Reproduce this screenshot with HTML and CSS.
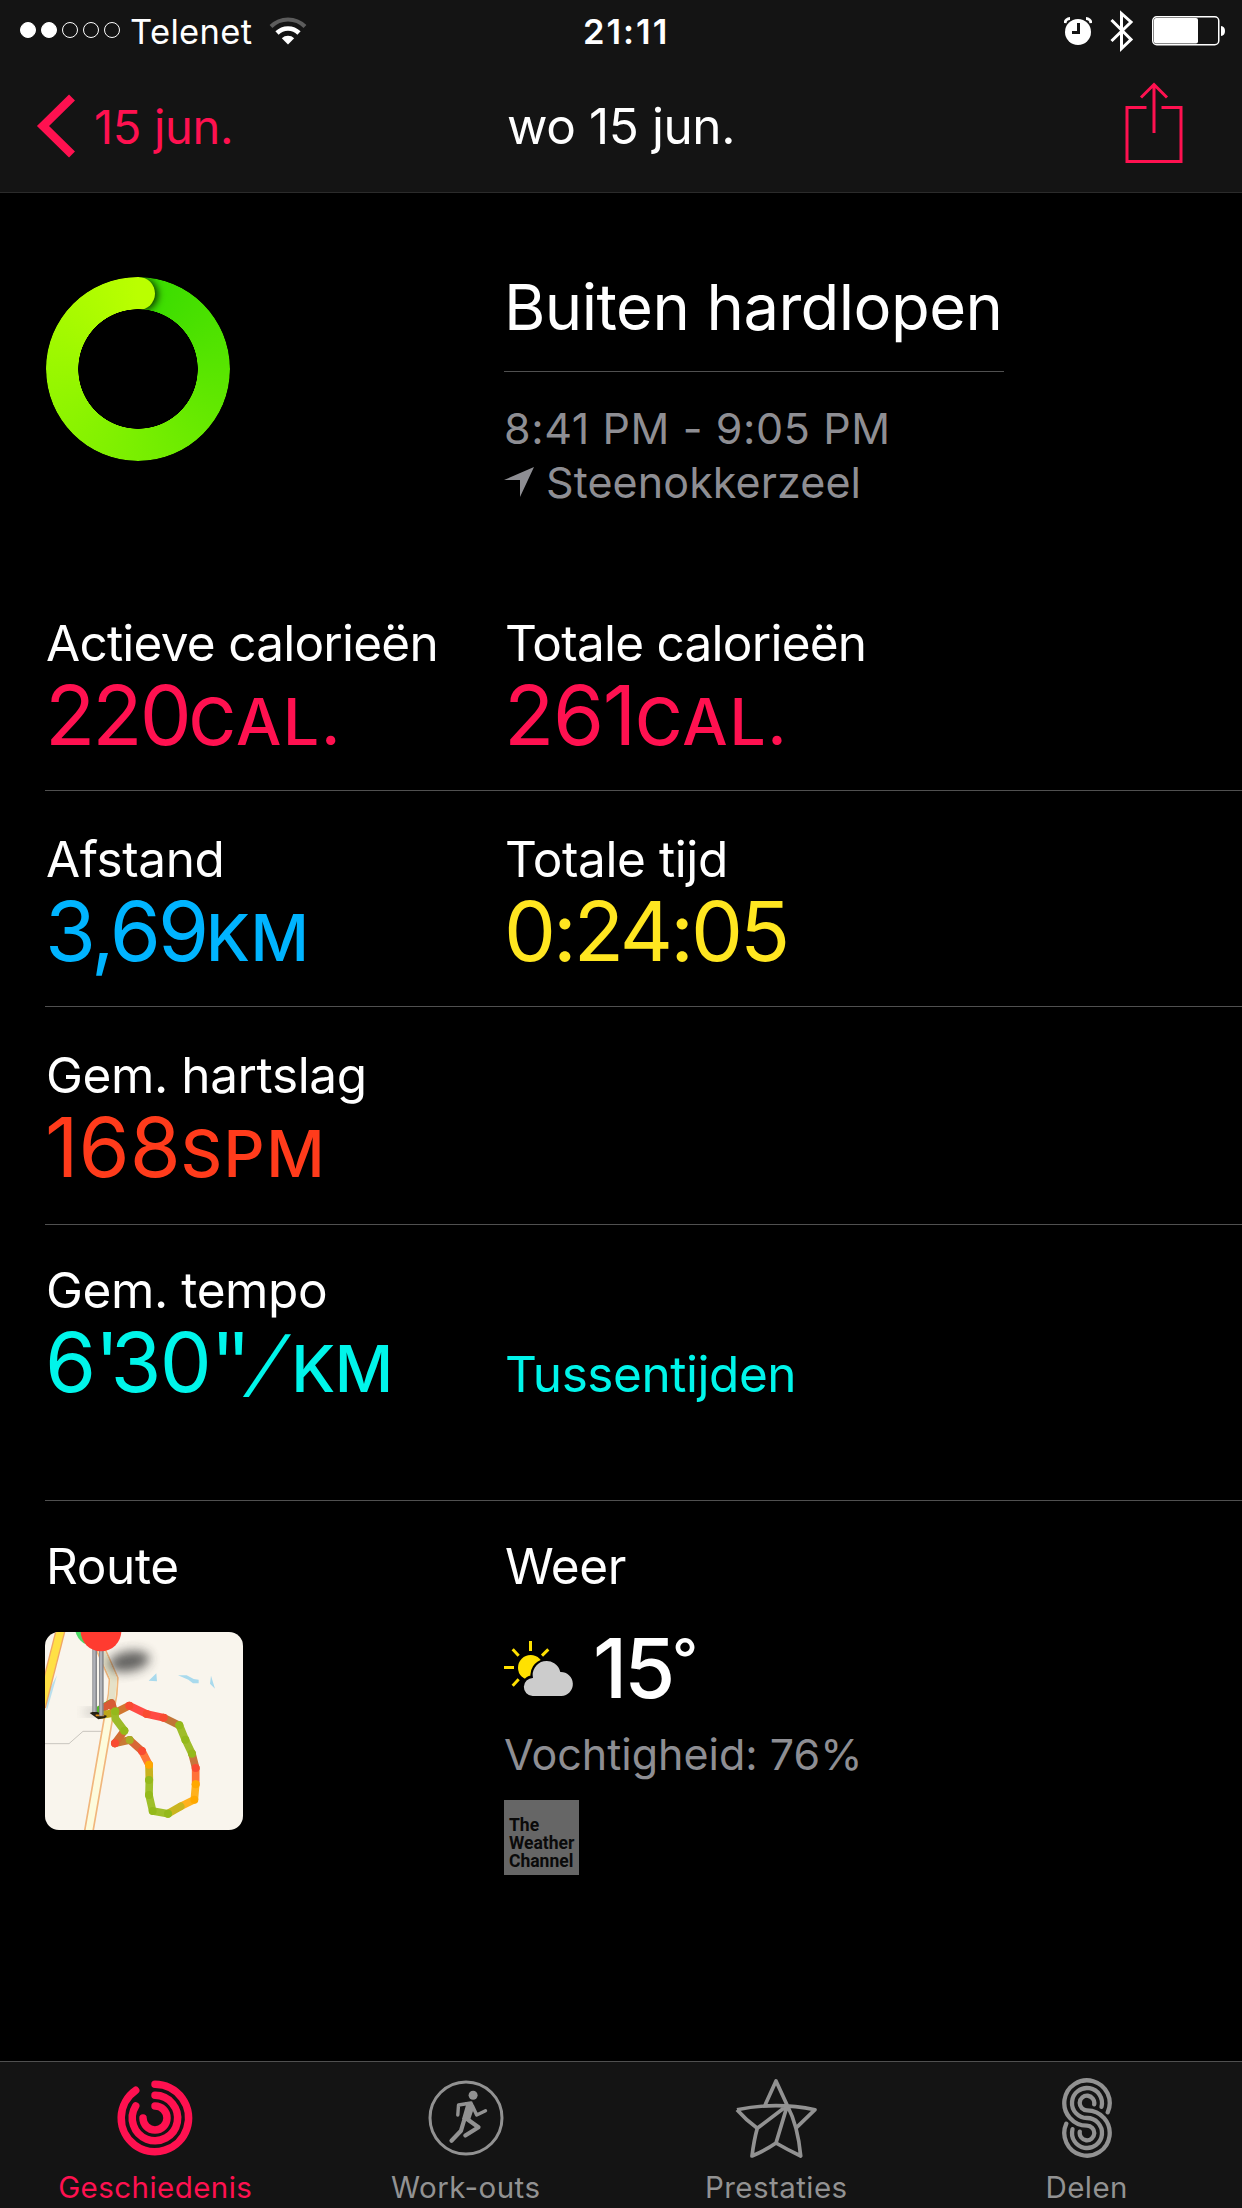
FILE: index.html
```html
<!DOCTYPE html>
<html lang="nl">
<head>
  <meta charset="UTF-8">
  <meta name="viewport" content="width=device-width, initial-scale=1.0">
  <title>Activiteit</title>
  <link rel="stylesheet" href="styles.css">
</head>
<body>
  <header class="header">
    <div class="status-bar">
      <div class="status-left">
        <span class="dot filled"></span>
        <span class="dot filled"></span>
        <span class="dot"></span>
        <span class="dot"></span>
        <span class="dot"></span>
        <span class="carrier">Telenet</span>
        <svg class="wifi" width="38" height="28" viewBox="0 0 38 28">
          <path d="M2 9.500A24 24 0 0 1 36 9.500" fill="none" stroke="#5c5c5c" stroke-width="4"/>
          <path d="M8 16A15.600 15.600 0 0 1 30 16" fill="none" stroke="#fff" stroke-width="4.600"/>
          <path d="M12.800 21.300A9 9 0 0 1 25.200 21.300L19 27.500Z" fill="#fff"/>
        </svg>
      </div>
      <div class="clock">21:11</div>
      <div class="status-right">
        <svg width="28" height="28" viewBox="0 0 28 28">
          <circle cx="14" cy="15" r="13" fill="#fff"/>
          <path d="M1 6A5 5 0 0 1 6 1.500M27 6A5 5 0 0 0 22 1.500" fill="none" stroke="#fff" stroke-width="3"/>
          <path d="M14.500 6V15.500H8" fill="none" stroke="#141414" stroke-width="3"/>
        </svg>
        <svg class="bluetooth" width="24" height="42" viewBox="0 0 24 42">
          <path d="M1.500 10L21 29.500L11.500 38.500V3.500L21 12L1.500 31" fill="none" stroke="#fff" stroke-width="3"/>
        </svg>
        <svg class="battery" width="74" height="30" viewBox="0 0 74 30">
          <rect x="0.750" y="0.750" width="66" height="28" rx="4" fill="none" stroke="#fff" stroke-width="1.500"/>
          <rect x="2" y="2" width="44" height="25.500" rx="2" fill="#fff"/>
          <path d="M69 10Q73 10.500 73 15T69 20Z" fill="#fff"/>
        </svg>
      </div>
    </div>
    <nav class="nav-bar">
      <a class="back" href="#">
        <svg width="40" height="64" viewBox="0 0 40 64">
          <path d="M36 3.500L7 32L36 60.500" fill="none" stroke="#ff1150" stroke-width="8.500"/>
        </svg>
        <span>15 jun.</span>
      </a>
      <h1>wo 15 jun.</h1>
      <a class="share" href="#" aria-label="Deel">
        <svg width="58" height="82" viewBox="0 0 58 82">
          <path d="M21.500 25.500H2V79.500H56V25.500H36.500M29 51V3M16 15.500L29 2.500L42 15.500" fill="none" stroke="#ff1150" stroke-width="3"/>
        </svg>
      </a>
    </nav>
  </header>

  <main>
    <section class="summary">
      <div class="ring"></div>
      <div class="info">
        <h2>Buiten hardlopen</h2>
        <p class="time">8:41 PM - 9:05 PM</p>
        <p class="place">
          <svg width="30" height="30" viewBox="0 0 30 30"><path d="M30 0L0 13H16V30Z" fill="#8e8e93"/></svg>
          <span>Steenokkerzeel</span>
        </p>
      </div>
    </section>

    <section class="row calories">
      <div>
        <h3>Actieve calorieën</h3>
        <p class="value pink">220<span class="unit">CAL.</span></p>
      </div>
      <div>
        <h3>Totale calorieën</h3>
        <p class="value pink total">261<span class="unit">CAL.</span></p>
      </div>
    </section>

    <section class="row">
      <div>
        <h3>Afstand</h3>
        <p class="value blue">3,69<span class="unit">KM</span></p>
      </div>
      <div>
        <h3>Totale tijd</h3>
        <p class="value yellow">0:24:05</p>
      </div>
    </section>

    <section class="row heart">
      <div>
        <h3>Gem. hartslag</h3>
        <p class="value orange">168<span class="unit">SPM</span></p>
      </div>
    </section>

    <section class="row pace">
      <div>
        <h3>Gem. tempo</h3>
        <p class="value cyan">6<span class="quote">'</span>30<span class="quote">''</span><span class="slash">/</span><span class="unit">KM</span></p>
      </div>
      <a class="splits" href="#">Tussentijden</a>
    </section>

    <section class="row last">
      <div>
        <h3>Route</h3>
        <svg class="map" viewBox="0 0 594 594">
          <defs>
            <filter id="blur" x="-50%" y="-50%" width="200%" height="200%"><feGaussianBlur stdDeviation="16"/></filter>
          </defs>
          <rect width="594" height="594" fill="#f9f5ed"/>
          <path d="M36 130L8 228L4 236V190Z" fill="#b9dfed"/>
          <path d="M47 -6L-12 225" stroke="#efa565" stroke-width="30"/>
          <path d="M47 -6L-12 225" stroke="#ffe045" stroke-width="22"/>
          <path d="M0 335H72L114 298H170" fill="none" stroke="#c9c5bf" stroke-width="3"/>
          <path d="M164 45L206 140L203 186L131 600" fill="none" stroke="#f1b67c" stroke-width="30"/>
          <path d="M164 45L206 140L203 186L131 600" fill="none" stroke="#fdfbdc" stroke-width="20"/>
          <path d="M164 45L206 140L200 205" fill="none" stroke="#e5e1c8" stroke-width="20"/>
          <path d="M311 146L334 124L336 148ZM399 130L425 130L446 141L461 143V154H444L430 143ZM498 131L510 170L495 155Z" fill="#a9daed"/>
          <ellipse cx="252" cy="88" rx="62" ry="30" fill="#333" opacity=".75" transform="rotate(-10 252 88)" filter="url(#blur)"/>
          <ellipse cx="140" cy="240" rx="22" ry="8" fill="#555" opacity=".5" filter="url(#blur)"/>
          <g fill="none" stroke-width="23" stroke-linecap="round" stroke-linejoin="round">
            <path d="M160 235L198 213" stroke="#55b52a"/>
            <path d="M180 225L200 213L209 245" stroke="#d85a35"/>
            <path d="M170 249L210 242" stroke="#bda719"/>
            <path d="M209 243L253 221" stroke="#d1762f"/>
            <path d="M253 221L305 246L356 257" stroke="#ff4b45"/>
            <path d="M356 257L403 280" stroke="#c17538"/>
            <path d="M403 280L421 323L441 365" stroke="#9fbd2b"/>
            <path d="M441 365L452 408" stroke="#c8753b"/>
            <path d="M452 408V457" stroke="#ff7138"/>
            <path d="M452 457L448 503L407 523" stroke="#ffb11d"/>
            <path d="M407 523L369 545" stroke="#cab51f"/>
            <path d="M369 545L323 537L312 489L313 444" stroke="#9fbf2a"/>
            <path d="M313 444L312 398" stroke="#c9b21d"/>
            <path d="M312 398L291 357" stroke="#ff7638"/>
            <path d="M291 357L254 324" stroke="#d86736"/>
            <path d="M254 324L210 334" stroke="#c97a35"/>
            <path d="M210 334L238 296" stroke="#d26c34"/>
            <path d="M238 296L211 260L209 240" stroke="#9dbb29"/>
          </g>
          <g fill="#94b91b">
            <circle cx="211" cy="238" r="12"/><circle cx="403" cy="280" r="12"/><circle cx="421" cy="323" r="12"/>
            <circle cx="441" cy="365" r="12"/><circle cx="312" cy="444" r="12"/><circle cx="312" cy="489" r="12"/>
            <circle cx="323" cy="537" r="12"/><circle cx="369" cy="545" r="12"/><circle cx="238" cy="296" r="12"/>
          </g>
          <g fill="#f94b31">
            <circle cx="253" cy="221" r="12"/><circle cx="305" cy="246" r="12"/><circle cx="356" cy="257" r="12"/>
            <circle cx="452" cy="408" r="12"/><circle cx="291" cy="357" r="12"/><circle cx="210" cy="334" r="12"/>
          </g>
          <g fill="#ffa800">
            <circle cx="452" cy="457" r="12"/><circle cx="448" cy="503" r="12"/><circle cx="312" cy="398" r="12"/>
          </g>
          <circle cx="254" cy="324" r="12" fill="#a9ad26"/>
          <path d="M134 243L150 237L186 252L180 258L160 262Z" fill="#252015"/>
          <path d="M152 250H178" stroke="#e38c15" stroke-width="5"/>
          <path d="M149 40V240M169 40V251" stroke="#85868a" stroke-width="14"/>
          <path d="M148 40V240M168 40V251" stroke="#b0b2b8" stroke-width="7"/>
          <circle cx="148" cy="-15" r="58" fill="#4cd964"/>
          <circle cx="168" cy="-3" r="61" fill="#ff3b30"/>
        </svg>
      </div>
      <div>
        <h3>Weer</h3>
        <div class="weather">
          <svg width="70" height="55" viewBox="0 0 210 165">
            <g stroke="#ffe100" stroke-width="9">
              <path d="M79.500 0V30M0 79.500H30M26 25L44 44M26 134L44 115M133 25L114 44"/>
            </g>
            <circle cx="80" cy="80" r="38" fill="#ffe100"/>
            <g stroke="#000" stroke-width="16">
              <path d="M87 165A27 27 0 0 1 88 111A40 40 0 0 1 168 94A36 36 0 0 1 172 165Z"/>
            </g>
            <path d="M86 165A27 27 0 0 1 87 111A41 41 0 0 1 169 93A36 36 0 0 1 172 165Z" fill="#ccc"/>
          </svg>
          <p class="degrees">15<span>°</span></p>
        </div>
        <p class="humidity">Vochtigheid: 76%</p>
        <div class="source">The<br>Weather<br>Channel</div>
      </div>
    </section>
  </main>

  <footer class="tab-bar">
    <a class="tab active" href="#">
      <svg width="84" height="84" viewBox="-42 -42 84 84">
        <g fill="none" stroke="currentColor" stroke-width="7.500" stroke-linecap="round">
          <path d="M0 -33.700A33.700 33.700 0 1 1 -19.300 -27.700"/>
          <path d="M0 -22.700A22.700 22.700 0 1 1 -19.300 -12"/>
          <path d="M0 -12A12 12 0 1 1 -12 0"/>
        </g>
      </svg>
      <span>Geschiedenis</span>
    </a>
    <a class="tab" href="#">
      <svg width="84" height="84" viewBox="-42 -42 84 84">
        <circle r="36" fill="none" stroke="currentColor" stroke-width="3"/>
        <circle cx="7.100" cy="-22.700" r="4.500" fill="currentColor"/>
        <path d="M-1 -16L7 -15L8 -10L4 2L-4 1L0 -13Z" fill="currentColor"/>
        <g fill="none" stroke="currentColor" stroke-linecap="round" stroke-linejoin="round">
          <path d="M-8.200 -3L-7.500 -13L5 -15M6.500 -12L10.700 -3L19.500 -7.300" stroke-width="3.400"/>
          <path d="M1 1L12.500 9.300L-0.700 17.500M-1.500 1L-5 12.700L-14.500 22.700" stroke-width="4.200"/>
        </g>
      </svg>
      <span>Work-outs</span>
    </a>
    <a class="tab" href="#">
      <svg width="84" height="84" viewBox="-42 -42 84 84">
        <g fill="none" stroke="currentColor" stroke-width="3.700" stroke-linejoin="round">
          <path d="M-10.700 -13.500L0 -37L11.300 -12.500M-39 -8.300Q0 -16.500 39 -8.300L20.700 9.300M-39 -8.300Q-30 2 -18.700 10.300Q-22 22 -24 38Q-10 32 0 25Q12 32 24.700 38Q22 8 11.300 -12.500L0 25M11.300 -12.500L-18.700 10.300"/>
        </g>
      </svg>
      <span>Prestaties</span>
    </a>
    <a class="tab" href="#">
      <svg width="84" height="84" viewBox="-42 -42 84 84">
        <g fill="none" stroke="currentColor" stroke-width="4.300" stroke-linecap="round">
          <path d="M20.700 -5.700A22.700 22.700 0 1 0 0 7.700A7.300 7.300 0 1 1 -7.200 13.700"/>
          <path d="M14.500 -11.200A15 15 0 1 0 0 0A15 15 0 1 1 -14.500 11.200"/>
          <path d="M7.200 -13.700A7.300 7.300 0 1 0 0 -7.700A22.700 22.700 0 1 1 -20.700 5.700"/>
        </g>
      </svg>
      <span>Delen</span>
    </a>
  </footer>
</body>
</html>
```
FILE: styles.css
```css
* {
  box-sizing: border-box;
}

body {
  background-color: #000;
  color: #fff;
  font-family: Inter, 'Liberation Sans', sans-serif;
  margin: 0;
  width: 1242px;
  height: 2208px;
  display: flex;
  flex-direction: column;
}

h1, h2, h3, p {
  margin: 0;
  font-weight: 400;
}

a {
  color: inherit;
  text-decoration: none;
}

svg {
  display: block;
  flex: none;
}

.header {
  height: 193px;
  background-color: #141414;
  border-bottom: 1px solid #2b2b2b;
}

.status-bar {
  height: 62px;
  display: grid;
  grid-template-columns: 583px 1fr auto;
  align-items: center;
  padding-right: 16px;
  font-size: 34.5px;
}

.status-left {
  display: flex;
  align-items: center;
  padding-left: 20px;
}

.dot {
  width: 16px;
  height: 16px;
  margin: 0 5px 2px 0;
  border: 1px solid #fff;
  border-radius: 50%;
}

.dot.filled {
  background-color: #fff;
}

.carrier {
  margin-left: 5px;
  letter-spacing: 0.35px;
}

.wifi {
  margin-left: 17px;
}

.clock {
  font-weight: 600;
  letter-spacing: 2px;
}

.status-right {
  display: flex;
  align-items: center;
}

.bluetooth {
  margin-left: 18px;
}

.battery {
  margin-left: 18px;
}

.nav-bar {
  height: 128px;
  display: grid;
  grid-template-columns: 1fr auto 1fr;
  align-items: center;
  padding: 0 59px;
}

.back {
  display: flex;
  align-items: center;
  gap: 18px;
  margin-left: -23px;
  color: #ff1150;
  font-size: 47px;
  letter-spacing: -0.3px;
}

.nav-bar h1 {
  font-size: 49.5px;
  letter-spacing: -0.4px;
}

.share {
  justify-self: end;
  margin-bottom: 6px;
}

main {
  flex: 1;
  padding-left: 45px;
}

.summary, .row {
  display: grid;
  grid-template-columns: 459px 1fr;
}

.summary {
  height: 382px;
  padding-top: 76px;
}

/* closed exercise ring with the end cap on top */
.ring {
  position: relative;
  width: 184px;
  height: 184px;
  margin: 8px 0 0 1px;
  border-radius: 50%;
  background: conic-gradient(#37db00, #79ef00 50%, #baff00);
  -webkit-mask: radial-gradient(circle, transparent 59.5px, #000 60px);
  mask: radial-gradient(circle, transparent 59.5px, #000 60px);
  overflow: hidden;
}

.ring::before {
  content: "";
  position: absolute;
  left: 76px;
  top: 0;
  width: 33px;
  height: 33px;
  border-radius: 50%;
  background-color: #baff00;
  box-shadow: 3px 1px 7px rgba(0, 0, 0, 0.75);
}

.ring::after {
  content: "";
  position: absolute;
  left: 0;
  top: 0;
  width: 92px;
  height: 92px;
  background: conic-gradient(from 0deg at 100% 100%, #37db00, #79ef00 50%, #baff00);
}

.info {
  width: 500px;
}

.info h2 {
  font-size: 63.3px;
  line-height: 76px;
  letter-spacing: -0.55px;
  padding-bottom: 26px;
  border-bottom: 1px solid #505050;
  margin-bottom: 29px;
  white-space: nowrap;
}

.time, .place, .humidity {
  font-size: 43px;
  line-height: 54px;
  color: #8e8e93;
}

.time {
  letter-spacing: 0.6px;
}

.place {
  display: flex;
  align-items: center;
  gap: 12px;
  letter-spacing: 0.1px;
}

.row {
  padding: 38px 0 33px;
  border-bottom: 1px solid #505050;
}

.heart {
  padding-bottom: 35px;
}

.pace {
  padding: 35px 0 96px;
}

.last {
  padding: 35px 0 0;
  border-bottom: none;
}

.row h3 {
  font-size: 49.5px;
  line-height: 60px;
  letter-spacing: -0.4px;
  padding-left: 1px;
}

.row.calories h3 {
  letter-spacing: -0.75px;
}

.value {
  font-size: 82.5px;
  line-height: 84px;
  letter-spacing: -3px;
}

.unit {
  font-size: 64px;
  font-weight: 500;
  line-height: 0;
  letter-spacing: 0.3px;
}

.pink {
  color: #ff1150;
}

.pink .unit {
  letter-spacing: 1.7px;
}

.total {
  letter-spacing: -1.3px;
}

.blue {
  color: #00b4ff;
}

.yellow {
  color: #ffe620;
}

.orange {
  color: #ff3b1b;
  letter-spacing: 0;
}

.orange .unit {
  letter-spacing: 1.5px;
}

.cyan {
  color: #00f5ea;
  letter-spacing: -1.5px;
}

.cyan .unit {
  letter-spacing: -0.5px;
}

.quote {
  letter-spacing: -9px;
}

.slash {
  display: inline-block;
  font-size: 72px;
  line-height: 60px;
  margin: 0 12px 0 13px;
  transform: translateY(-3px) skewX(-22deg);
}

.splits {
  align-self: end;
  font-size: 49.5px;
  line-height: 60px;
  letter-spacing: -0.45px;
  padding-left: 1px;
  color: #00f5ea;
}

.map {
  width: 198px;
  height: 198px;
  margin-top: 36px;
  border-radius: 14px;
}

.weather {
  display: flex;
  align-items: center;
  height: 84px;
  margin: 30px 0 17px;
  gap: 19px;
}

.degrees {
  font-size: 82.5px;
  line-height: 84px;
  font-weight: 500;
  letter-spacing: -3px;
}

.degrees span {
  font-size: 56px;
  line-height: 0;
  vertical-align: 19px;
}

.source {
  width: 75px;
  height: 75px;
  margin-top: 19px;
  padding: 16px 0 0 5px;
  background-color: #666;
  color: #0a0a0a;
  font: bold 17.5px/18px Roboto, sans-serif;
}

.tab-bar {
  height: 147px;
  display: grid;
  grid-template-columns: repeat(4, 1fr);
  background-color: #141414;
  border-top: 1px solid #505050;
  padding-top: 14px;
}

.tab {
  display: flex;
  flex-direction: column;
  align-items: center;
  gap: 9px;
  color: #929292;
  font-size: 29.5px;
  line-height: 36px;
  letter-spacing: 0.45px;
}

.tab.active {
  color: #ff1150;
}
```
